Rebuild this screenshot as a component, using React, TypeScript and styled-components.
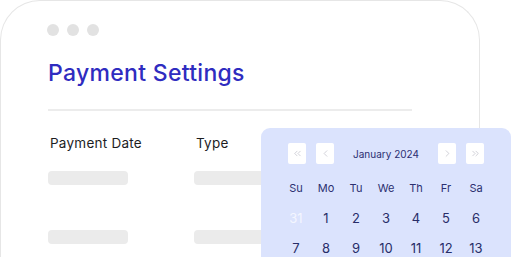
import { createGlobalStyle, styled } from "styled-components";
import { ChevronLeft, ChevronRight, ChevronsLeft, ChevronsRight } from "lucide-react";

const WEEKDAYS = ["Su", "Mo", "Tu", "We", "Th", "Fr", "Sa"];
const DAYS = [
  { label: 31, muted: true },
  ...Array.from({ length: 13 }, (_, i) => ({ label: i + 1, muted: false })),
];

const App = () => {
  return (
    <Page>
      <GlobalStyle />
      <WindowCard>
        <Dots>
          <Dot />
          <Dot />
          <Dot />
        </Dots>
        <Title>Payment Settings</Title>
        <Divider />
        <Table>
          <HeaderCell>Payment Date</HeaderCell>
          <HeaderCell>Type</HeaderCell>
          <Skeleton />
          <Skeleton />
          <Skeleton $row={2} />
          <Skeleton $row={2} />
        </Table>
      </WindowCard>

      <Calendar>
        <CalendarHead>
          <NavGroup>
            <NavButton>
              <ChevronsLeft />
            </NavButton>
            <NavButton>
              <ChevronLeft />
            </NavButton>
          </NavGroup>
          <MonthLabel>January 2024</MonthLabel>
          <NavGroup>
            <NavButton>
              <ChevronRight />
            </NavButton>
            <NavButton>
              <ChevronsRight />
            </NavButton>
          </NavGroup>
        </CalendarHead>

        <DayGrid>
          {WEEKDAYS.map((day) => (
            <WeekdayCell key={day}>{day}</WeekdayCell>
          ))}
          {DAYS.map((day) => (
            <DayCell key={`${day.label}-${day.muted}`} $muted={day.muted}>
              {day.label}
            </DayCell>
          ))}
        </DayGrid>
      </Calendar>
    </Page>
  );
};

const GlobalStyle = createGlobalStyle`
  html, body {
    margin: 0;
    padding: 0;
    background: #ffffff;
    overflow: hidden;
  }

  body {
    font-family: Inter, "Noto Sans", sans-serif;
  }
`;

const Page = styled.div`
  position: relative;
  width: 512px;
  height: 257px;
  overflow: hidden;
  background: #ffffff;
`;

const WindowCard = styled.div`
  box-sizing: border-box;
  width: 480px;
  height: 320px;
  padding: 23px 0 0 46px;
  border: 1.5px solid #e6e6e6;
  border-bottom: none;
  border-radius: 40px 40px 0 0;
  background: #ffffff;
`;

const Dots = styled.div`
  display: flex;
  gap: 8px;
`;

const Dot = styled.span`
  width: 12px;
  height: 12px;
  border-radius: 50%;
  background: #e2e2e2;
`;

const Title = styled.h1`
  margin: 24px 0 0 1px;
  font-size: 23px;
  line-height: 26px;
  font-weight: 500;
  letter-spacing: 0.3px;
  color: #2f2cc0;
`;

const Divider = styled.hr`
  width: 364px;
  margin: 23px 0 0 1px;
  border: none;
  border-top: 2px solid #ececec;
`;

const Table = styled.div`
  display: grid;
  grid-template-columns: 146px 80px;
  grid-auto-rows: auto;
  margin: 24px 0 0 3px;
`;

const HeaderCell = styled.div`
  font-size: 13.5px;
  line-height: 16px;
  font-weight: 400;
  letter-spacing: 0.25px;
  color: #1d1d1f;
`;

const Skeleton = styled.div<{ $row?: number }>`
  width: 80px;
  height: 14px;
  margin-top: ${({ $row }) => ($row === 2 ? "45px" : "20px")};
  margin-left: -2px;
  border-radius: 4px;
  background: #ebebeb;
`;

const Calendar = styled.div`
  position: absolute;
  left: 261px;
  top: 128px;
  box-sizing: border-box;
  width: 250px;
  height: 160px;
  padding: 15px 20px 0;
  border-radius: 9px;
  background: #dbe3fd;
`;

const CalendarHead = styled.div`
  display: flex;
  align-items: center;
  justify-content: space-between;
  padding: 0 7px;
`;

const NavGroup = styled.div`
  display: flex;
  gap: 10px;
`;

const NavButton = styled.button`
  display: flex;
  align-items: center;
  justify-content: center;
  width: 18px;
  height: 21px;
  padding: 0;
  border: none;
  border-radius: 2px;
  background: #ffffff;

  & > svg {
    width: 11px;
    height: 11px;
    stroke: #b9b9c4;
    stroke-width: 1.4;
  }
`;

const MonthLabel = styled.span`
  font-size: 10px;
  line-height: 14px;
  color: #2c2f72;
`;

const DayGrid = styled.div`
  display: grid;
  grid-template-columns: repeat(7, 30px);
  grid-auto-rows: 30px;
  margin-top: 9px;
`;

const WeekdayCell = styled.div`
  display: flex;
  align-items: center;
  justify-content: center;
  font-size: 11px;
  color: #2c3070;
`;

const DayCell = styled.div<{ $muted: boolean }>`
  display: flex;
  align-items: center;
  justify-content: center;
  font-size: 13px;
  color: ${({ $muted }) => ($muted ? "#f4f6ff" : "#282d68")};
`;

export default App;
